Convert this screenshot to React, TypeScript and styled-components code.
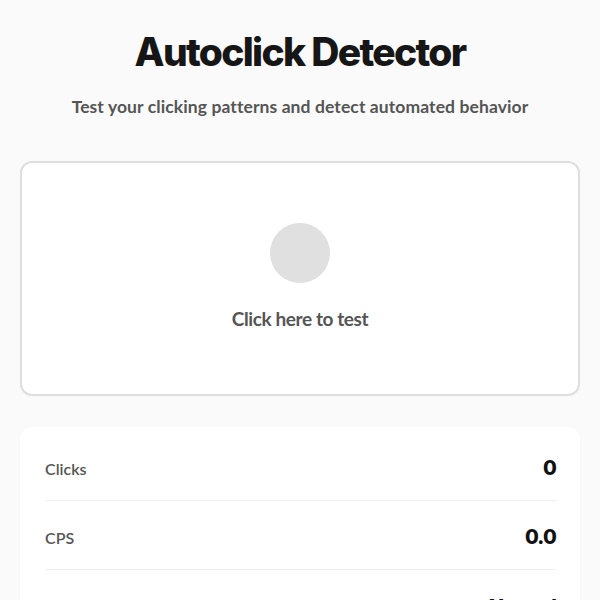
import React from 'react';
import styled, { createGlobalStyle } from 'styled-components';

const GlobalStyle = createGlobalStyle`
  html, body {
    margin: 0;
    padding: 0;
    background: #fafafa;
  }
  body {
    font-family: Lato, "Noto Sans", sans-serif;
    color: #111;
  }
`;

const Page = styled.div`
  max-width: 560px;
  margin: 0 auto;
  padding: 28px 20px 40px;
  display: flex;
  flex-direction: column;
`;

const Title = styled.h1`
  margin: 0;
  text-align: center;
  font-family: Inter, Lato, sans-serif;
  font-size: 39px;
  font-weight: 800;
  letter-spacing: -1.7px;
  color: #161616;
  line-height: 48px;
`;

const Subtitle = styled.p`
  margin: 20px 0 0;
  text-align: center;
  font-size: 17.5px;
  font-weight: 700;
  color: #555;
  letter-spacing: 0.1px;
`;

const ClickArea = styled.div`
  margin-top: 44px;
  height: 235px;
  box-sizing: border-box;
  background: #fff;
  border: 2px solid #dedede;
  border-radius: 12px;
  display: flex;
  flex-direction: column;
  align-items: center;
  justify-content: center;
  gap: 24px;
  padding-bottom: 4px;
  cursor: pointer;
`;

const Dot = styled.div`
  width: 60px;
  height: 60px;
  border-radius: 50%;
  background: #e0e0e0;
`;

const ClickText = styled.div`
  font-size: 19px;
  font-weight: 700;
  color: #555;
  letter-spacing: -0.4px;
`;

const StatsCard = styled.div`
  margin-top: 31px;
  background: #fff;
  border-radius: 12px;
  padding: 5px 24px 8px 25px;
  box-shadow: 0 1px 3px rgba(0, 0, 0, 0.03);
`;

const Row = styled.div`
  display: flex;
  align-items: center;
  justify-content: space-between;
  box-sizing: border-box;
  height: 69px;
  padding-top: 4px;
  border-bottom: 1px solid #efefef;
  &:last-child {
    border-bottom: none;
  }
`;

const Label = styled.span`
  font-size: 16px;
  font-weight: 600;
  color: #555;
`;

const Value = styled.span`
  font-family: Inter, Lato, sans-serif;
  font-size: 20px;
  font-weight: 800;
  color: #111;
  letter-spacing: -0.8px;
`;

const stats = [
  { label: 'Clicks', value: '0' },
  { label: 'CPS', value: '0.0' },
  { label: 'Pattern', value: 'Normal' },
];

export default function App() {
  return (
    <>
      <GlobalStyle />
      <Page>
        <Title>Autoclick Detector</Title>
        <Subtitle>Test your clicking patterns and detect automated behavior</Subtitle>
        <ClickArea>
          <Dot />
          <ClickText>Click here to test</ClickText>
        </ClickArea>
        <StatsCard>
          {stats.map((s) => (
            <Row key={s.label}>
              <Label>{s.label}</Label>
              <Value>{s.value}</Value>
            </Row>
          ))}
        </StatsCard>
      </Page>
    </>
  );
}
